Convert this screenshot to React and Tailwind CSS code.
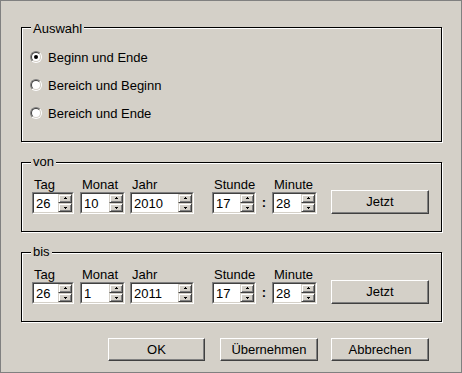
import React from 'react';

const Arrow = ({ up }) => (
  <svg width="5" height="3" viewBox="0 0 5 3" shapeRendering="crispEdges">
    {up ? (
      <>
        <rect x="2" y="0" width="1" height="1" fill="black" />
        <rect x="1" y="1" width="3" height="1" fill="black" />
      </>
    ) : (
      <>
        <rect x="1" y="1" width="3" height="1" fill="black" />
        <rect x="2" y="2" width="1" height="1" fill="black" />
      </>
    )}
  </svg>
);

const SpinButton = ({ up }) => (
  <div className="w-[14px] h-[9px] bg-[#d4d0c8] border border-t-[#d4d0c8] border-l-[#d4d0c8] border-r-[#404040] border-b-[#404040] shadow-[inset_1px_1px_0_white,inset_-1px_-1px_0_#808080] flex items-center justify-center">
    <Arrow up={up} />
  </div>
);

const Spin = ({ value, className }) => (
  <div className={`h-[22px] flex border border-t-[#808080] border-l-[#808080] border-b-white border-r-white ${className}`}>
    <div className="flex-1 flex items-center bg-white border border-t-[#404040] border-l-[#404040] border-b-[#d4d0c8] border-r-[#d4d0c8]">
      <span className="flex-1 pl-[2px] leading-[15px]">{value}</span>
      <div className="flex flex-col">
        <SpinButton up />
        <SpinButton />
      </div>
    </div>
  </div>
);

const Button = ({ children, className }) => (
  <button className={`flex items-center justify-center bg-[#d4d0c8] border border-t-white border-l-white border-r-[#404040] border-b-[#404040] shadow-[inset_-1px_-1px_0_#808080] ${className}`}>
    {children}
  </button>
);

const Field = ({ label, children, className }) => (
  <div className={`flex flex-col ${className}`}>
    <span className="h-[15px] leading-[15px] pl-[2px]">{label}</span>
    {children}
  </div>
);

const Group = ({ title, titleTop, className, children }) => (
  <div className={`relative w-[421px] border border-black shadow-[inset_1px_1px_0_white,1px_1px_0_white] ${className}`}>
    <span className={`absolute left-[9px] px-[2px] h-[15px] leading-[15px] bg-[#d4d0c8] ${titleTop}`}>{title}</span>
    {children}
  </div>
);

const Radio = ({ checked, label }) => (
  <label className="flex items-center h-[28px] gap-[6px]">
    <span className="w-[12px] h-[12px] flex rounded-full border border-t-[#808080] border-l-[#808080] border-b-white border-r-white">
      <span className="flex-1 flex items-center justify-center rounded-full bg-white border border-t-[#404040] border-l-[#404040] border-b-[#d4d0c8] border-r-[#d4d0c8]">
        {checked && <span className="w-[4px] h-[4px] rounded-full bg-black" />}
      </span>
    </span>
    <span className="leading-[15px]">{label}</span>
  </label>
);

const DateRow = ({ tag, monat, jahr, stunde, minute }) => (
  <div className="flex items-end pt-[14px] pl-[10px]">
    <Field label="Tag"><Spin value={tag} className="w-[42px]" /></Field>
    <Field label="Monat" className="ml-[6px]"><Spin value={monat} className="w-[45px]" /></Field>
    <Field label="Jahr" className="ml-[5px]"><Spin value={jahr} className="w-[64px]" /></Field>
    <Field label="Stunde" className="ml-[18px]"><Spin value={stunde} className="w-[44px]" /></Field>
    <div className="w-[16px] h-[22px] flex items-center justify-center font-bold">:</div>
    <Field label="Minute"><Spin value={minute} className="w-[45px]" /></Field>
    <Button className="ml-[14px] w-[98px] h-[24px]">Jetzt</Button>
  </div>
);

const App = () => {
  return (
    <div className="w-[462px] h-[373px] bg-[#d4d0c8] border border-[#808080] pl-[20px] pt-[26px] text-[13px] text-black font-['Liberation_Sans',Arial,sans-serif] select-none">
      <Group title="Auswahl" titleTop="top-[-7px]" className="h-[115px]">
        <div className="pt-[15px] pl-[8px]">
          <Radio checked label="Beginn und Ende" />
          <Radio label="Bereich und Beginn" />
          <Radio label="Bereich und Ende" />
        </div>
      </Group>

      <Group title="von" titleTop="top-[-9px]" className="h-[70px] mt-[20px]">
        <DateRow tag="26" monat="10" jahr="2010" stunde="17" minute="28" />
      </Group>

      <Group title="bis" titleTop="top-[-9px]" className="h-[70px] mt-[20px]">
        <DateRow tag="26" monat="1" jahr="2011" stunde="17" minute="28" />
      </Group>

      <div className="flex mt-[16px]">
        <Button className="ml-[87px] w-[97px] h-[23px]">OK</Button>
        <Button className="ml-[15px] w-[98px] h-[23px]">Übernehmen</Button>
        <Button className="ml-[13px] w-[98px] h-[23px]">Abbrechen</Button>
      </div>
    </div>
  );
};

export default App;
